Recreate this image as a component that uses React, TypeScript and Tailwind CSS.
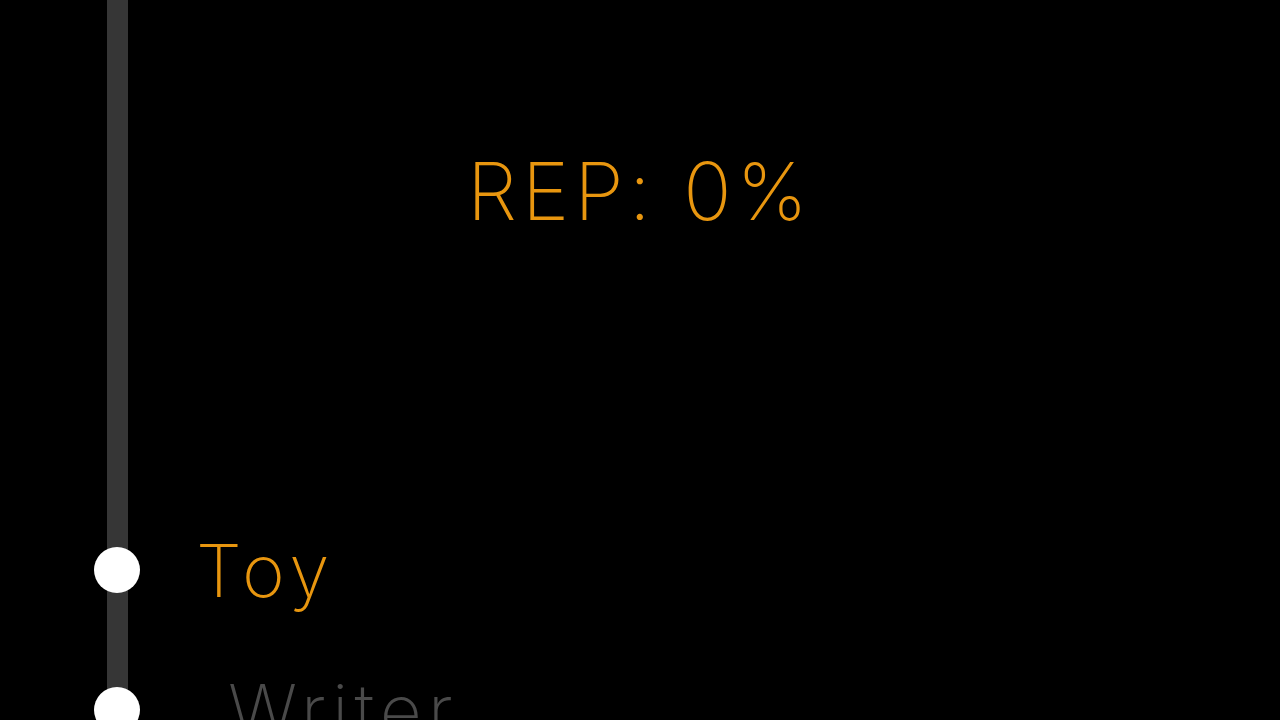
import React from "react";

// Rank ladder: reputation readout on top, ranks hanging off a vertical rail.
const ranks = [
  { name: "Toy", active: true },
  { name: "Writer", active: false },
  { name: "Up-and-comer", active: false },
];

export default function App() {
  return (
    <div
      className="relative h-[720px] w-[1280px] overflow-hidden bg-black"
      style={{ fontFamily: "Inter, 'Liberation Sans', sans-serif" }}
    >
      {/* rail */}
      <div className="absolute left-[107px] top-0 bottom-0 w-[21px] bg-[#363636]" aria-hidden="true" />

      <div className="relative flex flex-col">
        <div className="flex h-[260px] justify-center pt-[151px]">
          <p className="text-[80px] leading-none font-extralight tracking-[5px] text-[#e8960f]">REP: 0%</p>
        </div>

        <div className="flex flex-col gap-[76px] pt-[278px]">
          {ranks.map((r) => (
            <div key={r.name} className="flex h-[64px] items-center">
              <div className="ml-[94px] h-[46px] w-[46px] rounded-full bg-white" />
              <span
                className={
                  "ml-[56px] text-[73px] leading-none font-extralight tracking-[6px] " +
                  (r.active ? "text-[#e8960f]" : "pl-[32px] text-[#4a4a4a]")
                }
              >
                {r.name}
              </span>
            </div>
          ))}
        </div>
      </div>
    </div>
  );
}
